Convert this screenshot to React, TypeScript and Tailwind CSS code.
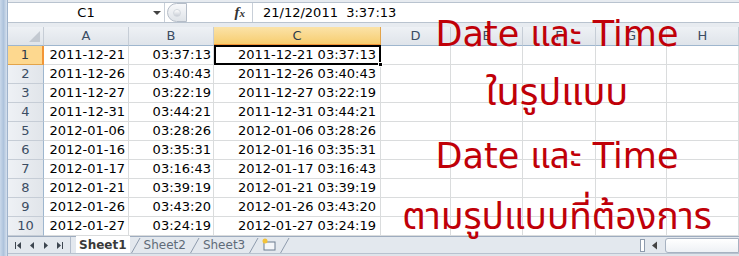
import React from 'react';

const rows: [string, string][] = [
  ['2011-12-21', '03:37:13'],
  ['2011-12-26', '03:40:43'],
  ['2011-12-27', '03:22:19'],
  ['2011-12-31', '03:44:21'],
  ['2012-01-06', '03:28:26'],
  ['2012-01-16', '03:35:31'],
  ['2012-01-17', '03:16:43'],
  ['2012-01-21', '03:39:19'],
  ['2012-01-26', '03:43:20'],
  ['2012-01-27', '03:24:19'],
];

const columns = ['A', 'B', 'C', 'D', 'E', 'F', 'G', 'H'];
const gridCols = 'grid-cols-[36px_85px_85px_167px_70px_72px_73px_71px_72px]';

function ColumnHeader({ label }: { label: string }) {
  const active = label === 'C';
  return (
    <div
      className={
        active
          ? 'flex items-center justify-center border-r border-b-2 border-r-[#e3a44a] border-b-[#f29536] bg-gradient-to-b from-[#fbe3a8] to-[#f7cd6e] text-[#2d3b4a]'
          : 'flex items-center justify-center border-r border-b border-r-[#c6cdd6] border-b-[#9eb6ce] bg-gradient-to-b from-[#eef1f5] to-[#dfe4ea] text-[#3b4d63]'
      }
    >
      {label}
    </div>
  );
}

function Slant() {
  return (
    <svg width="11" height="17" viewBox="0 0 11 17" className="shrink-0">
      <path d="M1 17 L10 1" stroke="#8e9bad" strokeWidth="1" fill="none" />
    </svg>
  );
}

function SheetTab({ label, active }: { label: string; active?: boolean }) {
  return (
    <div className="flex items-stretch">
      <div
        className={
          active
            ? 'flex items-center px-[3px] bg-white font-bold text-[#3a3a3a] -mt-px'
            : 'flex items-center px-[3px] text-[#5f6b78]'
        }
      >
        {label}
      </div>
      <Slant />
    </div>
  );
}

export default function App() {
  return (
    <div className="relative flex w-[739px] h-[256px] overflow-hidden bg-[#e9edf2] font-['DejaVu_Sans',sans-serif] text-[13px]">
      {/* window edge */}
      <div className="w-[8px] shrink-0 bg-gradient-to-r from-[#c9d8ea] via-[#aec3dc] to-[#d6e1ee] border-r border-[#9fb3cc]" />

      <div className="flex flex-col flex-1 min-w-0">
        {/* formula bar */}
        <div className="h-[27px] flex flex-col pt-[2px] bg-[#e7ebf0]">
          <div className="h-[21px] flex items-stretch bg-white border-y border-[#b9c3cf]">
            <div className="w-[157px] flex items-center relative border-r border-[#c8cfd8]">
              <span className="flex-1 text-center text-[13px] text-black">C1</span>
              <span className="absolute right-[3px] top-[8px] w-0 h-0 border-x-[4px] border-x-transparent border-t-[4px] border-t-[#444]" />
            </div>
            <div className="w-[87px] flex items-center">
              <div className="ml-[2px] w-[20px] h-[19px] rounded-l-full border border-[#b5bdc8] bg-gradient-to-b from-[#f8f9fb] to-[#dfe3e8] flex items-center justify-center">
                <span className="w-[8px] h-[8px] rounded-full bg-gradient-to-b from-[#ffffff] to-[#c9ced6] border border-[#d3d8de]" />
              </div>
              <span className="ml-auto mr-[7px] italic font-['Liberation_Serif',serif] text-[15px] text-[#333] font-bold">
                f<span className="text-[11px]">x</span>
              </span>
            </div>
            <div className="flex-1 flex items-center pl-[10px] border-l border-[#c8cfd8] text-black whitespace-pre">
              21/12/2011  3:37:13
            </div>
          </div>
        </div>

        {/* grid */}
        <div className={`grid ${gridCols} auto-rows-[19px] bg-white`}>
          <div className="relative border-r border-b border-r-[#c6cdd6] border-b-[#9eb6ce] bg-gradient-to-b from-[#eef1f5] to-[#dfe4ea]">
            <span className="absolute right-[3px] bottom-[3px] w-0 h-0 border-l-[11px] border-l-transparent border-b-[11px] border-b-[#c3c9d1]" />
          </div>
          {columns.map((c) => (
            <ColumnHeader key={c} label={c} />
          ))}

          {rows.map(([date, time], i) => (
            <React.Fragment key={date}>
              <div
                className={
                  i === 0
                    ? 'flex items-center justify-center border-r-2 border-b border-r-[#f29536] border-b-[#e3a44a] bg-[#fdd88f] text-[#2d3b4a]'
                    : 'flex items-center justify-center border-r border-b border-r-[#9eb6ce] border-b-[#c6cdd6] bg-gradient-to-r from-[#eef1f5] to-[#e1e5ea] text-[#3b4d63]'
                }
              >
                {i + 1}
              </div>
              <div className="flex items-center justify-end pr-[3px] border-r border-b border-[#dadcdd] text-black">
                {date}
              </div>
              <div className="flex items-center justify-end pr-[2px] border-r border-b border-[#dadcdd] text-black">
                {time}
              </div>
              <div
                className={
                  i === 0
                    ? 'relative flex items-center justify-end pr-[3px] border-2 border-black text-black -mt-px'
                    : 'flex items-center justify-end pr-[4px] border-r border-b border-[#dadcdd] text-black'
                }
              >
                {date} {time}
                {i === 0 && (
                  <span className="absolute -right-[4px] -bottom-[4px] w-[5px] h-[5px] bg-black border border-white" />
                )}
              </div>
              {[0, 1, 2, 3, 4].map((k) => (
                <div key={k} className="border-r border-b border-[#dadcdd]" />
              ))}
            </React.Fragment>
          ))}
        </div>

        {/* sheet tabs */}
        <div className="flex-1 flex flex-col bg-[#e3e8ee]">
          <div className="h-[17px] flex items-stretch border-t border-[#9eacbf] text-[12px]">
            <div className="w-[62px] flex items-center justify-around px-[4px]">
              <svg width="9" height="9" viewBox="0 0 9 9"><rect x="1" y="1" width="1" height="7" fill="#3d4650" /><path d="M7 1 L3 4.5 L7 8 Z" fill="#3d4650" /></svg>
              <svg width="9" height="9" viewBox="0 0 9 9"><path d="M6 1 L2 4.5 L6 8 Z" fill="#3d4650" /></svg>
              <svg width="9" height="9" viewBox="0 0 9 9"><path d="M3 1 L7 4.5 L3 8 Z" fill="#3d4650" /></svg>
              <svg width="9" height="9" viewBox="0 0 9 9"><path d="M2 1 L6 4.5 L2 8 Z" fill="#3d4650" /><rect x="7" y="1" width="1" height="7" fill="#3d4650" /></svg>
            </div>
            <div className="w-px bg-[#b2bccb]" />
            <div className="w-[5px]" />
            <SheetTab label="Sheet1" active />
            <SheetTab label="Sheet2" />
            <SheetTab label="Sheet3" />
            <div className="flex items-center px-[2px]">
              <svg width="16" height="14" viewBox="0 0 16 14">
                <rect x="3" y="4" width="11" height="8" fill="#f4f6f9" stroke="#6d7c90" />
                <circle cx="4" cy="3" r="2.5" fill="#f2c23a" />
              </svg>
            </div>
            <Slant />
            <div className="flex-1" />
            <div className="flex items-center gap-[6px]">
              <span className="w-[5px] h-[13px] bg-white border border-[#8e9bad]" />
              <svg width="8" height="9" viewBox="0 0 8 9"><path d="M6 0.5 L1 4.5 L6 8.5 Z" fill="#444" /></svg>
              <div className="w-[74px] h-[15px] rounded-l-[3px] border border-[#a7b2c1] bg-gradient-to-b from-[#ffffff] to-[#eef1f5]" />
            </div>
          </div>
          <div className="flex-1 border-t border-[#b8c2cf] bg-[#dfe4ea]" />
        </div>
      </div>

      {/* overlay caption */}
      <div className="absolute left-[397px] top-[10px] w-[320px] flex flex-col items-center text-[#c00008] text-[35px] font-['DejaVu_Sans','Noto_Sans','Noto_Sans_Thai','Tahoma',sans-serif] pointer-events-none whitespace-nowrap">
        <div className="h-[48px] leading-[48px]">Date และ Time</div>
        <div className="h-[60px] leading-[60px] mt-[4px] text-[38px]">ในรูปแบบ</div>
        <div className="h-[60px] leading-[60px] mt-[4px]">Date และ Time</div>
        <div className="h-[60px] leading-[60px] mt-[1px] text-[37px]">ตามรูปแบบที่ต้องการ</div>
      </div>
    </div>
  );
}
